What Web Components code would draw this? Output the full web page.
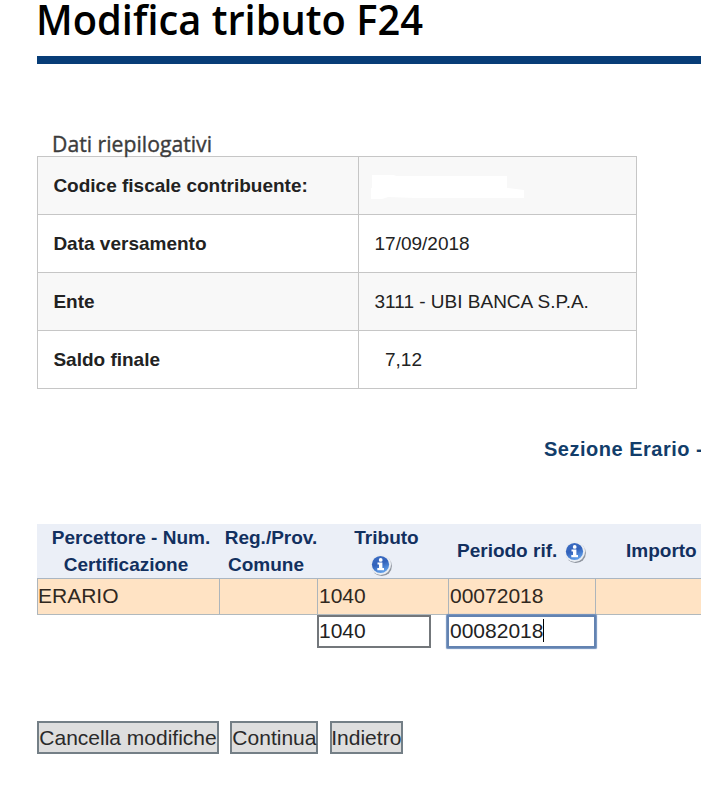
<!DOCTYPE html>
<html lang="it">
<head>
<meta charset="utf-8">
<title>Modifica tributo F24</title>
<style>
  body {
    margin: 0;
    width: 701px;
    height: 812px;
    overflow: hidden;
    background: #fff;
    color: #222;
    font-family: "Liberation Sans", Arial, sans-serif;
    font-size: 21px;
  }
</style>
</head>
<body>
<f24-page>
  <page-title slot="title" label="Modifica tributo F24"></page-title>
  <summary-table slot="summary" label="Dati riepilogativi">
    <summary-row shaded><span slot="name">Codice fiscale contribuente:</span><redacted-value></redacted-value></summary-row>
    <summary-row><span slot="name">Data versamento</span>17/09/2018</summary-row>
    <summary-row shaded><span slot="name">Ente</span>3111 - UBI BANCA S.P.A.</summary-row>
    <summary-row indent><span slot="name">Saldo finale</span>7,12</summary-row>
  </summary-table>
  <section-heading slot="section">Sezione Erario -</section-heading>
  <tax-table slot="taxes"></tax-table>
  <action-button slot="actions" style="--w: 182px">Cancella modifiche</action-button>
  <action-button slot="actions" style="--w: 88px">Continua</action-button>
  <action-button slot="actions" style="--w: 73px">Indietro</action-button>
</f24-page>

<script>
class F24Page extends HTMLElement {
  constructor() {
    super();
    this.attachShadow({ mode: "open" }).innerHTML = `
      <style>
        :host {
          display: flex;
          flex-direction: column;
          padding-left: 37px;
        }
        .summary { margin-top: 64px; }
        .section { margin-top: 47px; }
        .taxes { margin-top: 61px; }
        .actions {
          display: flex;
          margin-top: 72px;
        }
        ::slotted(action-button) { margin-right: 11.4px; }
      </style>
      <slot name="title"></slot>
      <div class="summary"><slot name="summary"></slot></div>
      <div class="section"><slot name="section"></slot></div>
      <div class="taxes"><slot name="taxes"></slot></div>
      <div class="actions"><slot name="actions"></slot></div>
    `;
  }
}

class PageTitle extends HTMLElement {
  connectedCallback() {
    this.attachShadow({ mode: "open" }).innerHTML = `
      <style>
        :host {
          display: block;
          height: 56px;
          border-bottom: 8px solid #073d77;
        }
        svg { display: block; overflow: visible; }
        text {
          font: 600 41px "Open Sans", "Noto Sans", sans-serif;
          fill: #000;
        }
      </style>
      <svg width="420" height="56">
        <text x="-1" y="35" textLength="387" lengthAdjust="spacingAndGlyphs">${this.getAttribute("label")}</text>
      </svg>
    `;
  }
}

class SummaryTable extends HTMLElement {
  connectedCallback() {
    this.attachShadow({ mode: "open" }).innerHTML = `
      <style>
        :host {
          display: block;
          width: 600px;
          font-size: 19px;
        }
        svg {
          display: block;
          position: relative;
          overflow: visible;
        }
        text {
          font: 400 22.5px "Open Sans", "Noto Sans", sans-serif;
          fill: #3c3c3c;
          stroke: #3c3c3c;
          stroke-width: 0.4px;
        }
        .rows { border-top: 1px solid #c6c6c6; }
      </style>
      <svg width="200" height="28">
        <text x="15" y="24" textLength="160" lengthAdjust="spacingAndGlyphs">${this.getAttribute("label")}</text>
      </svg>
      <div class="rows"><slot></slot></div>
    `;
  }
}

class SummaryRow extends HTMLElement {
  constructor() {
    super();
    this.attachShadow({ mode: "open" }).innerHTML = `
      <style>
        :host {
          display: grid;
          grid-template-columns: 322px 278px;
          box-sizing: border-box;
          height: 58px;
          border-bottom: 1px solid #c6c6c6;
          color: #222;
        }
        :host([shaded]) { background: #f8f8f8; }
        .name, .value {
          display: flex;
          align-items: center;
          box-sizing: border-box;
          padding-left: 15.5px;
          border-right: 1px solid #c6c6c6;
        }
        .name {
          padding-left: 15.4px;
          border-left: 1px solid #c6c6c6;
          font-weight: bold;
        }
        :host([indent]) .value { padding-left: 26px; }
      </style>
      <div class="name"><slot name="name"></slot></div>
      <div class="value"><slot></slot></div>
    `;
  }
}

class RedactedValue extends HTMLElement {
  constructor() {
    super();
    this.attachShadow({ mode: "open" }).innerHTML = `
      <style>
        :host { display: block; margin: 2px 0 0 -5px; }
        svg { display: block; }
      </style>
      <svg width="156" height="26" viewBox="0 0 156 26">
        <path fill="#fff" d="M2 1H24L26 2H137V14L154 16V24H45L18 23L12 25H1V14H2Z"/>
      </svg>
    `;
  }
}

class SectionHeading extends HTMLElement {
  constructor() {
    super();
    this.attachShadow({ mode: "open" }).innerHTML = `
      <style>
        :host {
          display: block;
          padding-left: 507px;
          font-size: 20px;
          font-weight: bold;
          line-height: 27px;
          letter-spacing: 0.5px;
          white-space: nowrap;
          color: #123d6a;
        }
      </style>
      <slot></slot>
    `;
  }
}

class InfoIcon extends HTMLElement {
  constructor() {
    super();
    this.attachShadow({ mode: "open" }).innerHTML = `
      <style>
        :host { display: block; width: 24px; height: 24px; }
        svg { display: block; }
      </style>
      <svg width="24" height="24" viewBox="0 0 24 24">
        <defs>
          <linearGradient id="ball" x1="0" y1="0" x2="0.4" y2="1">
            <stop offset="0" stop-color="#3f6fc4"/>
            <stop offset="0.55" stop-color="#3262bb"/>
            <stop offset="1" stop-color="#5d9be6"/>
          </linearGradient>
          <filter id="soft" x="-20%" y="-20%" width="140%" height="140%">
            <feGaussianBlur stdDeviation="0.7"/>
          </filter>
        </defs>
        <circle cx="12.8" cy="13" r="10.1" fill="#8f959f" filter="url(#soft)"/>
        <circle cx="11.7" cy="11.6" r="10.4" fill="#e9edf3"/>
        <circle cx="11.5" cy="11.5" r="8.6" fill="url(#ball)"/>
        <circle cx="11.7" cy="6.9" r="1.9" fill="#fff"/>
        <path fill="#fff" d="M8.5 9.6H13.4V15.1H15V17.2H8.3V15.1H10V11.5H8.5Z"/>
      </svg>
    `;
  }
}

class TextField extends HTMLElement {
  constructor() {
    super();
    this.attachShadow({ mode: "open" }).innerHTML = `
      <style>
        :host {
          display: flex;
          align-items: center;
          box-sizing: border-box;
          width: 114px;
          height: 33px;
          margin-left: -1px;
          padding-bottom: 2px;
          border: 2px solid #73777b;
          background: #fff;
          color: #222;
        }
        :host([focused]) {
          width: 149px;
          margin-left: -2px;
          padding-left: 1px;
          border-color: #6383b1;
          border-radius: 1px;
          box-shadow: 0 0 1px 0.5px #6f8fbd;
        }
        .caret { display: none; width: 1px; height: 23px; background: #000; }
        :host([focused]) .caret { display: block; }
      </style>
      <slot></slot><span class="caret"></span>
    `;
  }
}

class TaxTable extends HTMLElement {
  constructor() {
    super();
    this.attachShadow({ mode: "open" }).innerHTML = `
      <style>
        :host { display: block; width: 664px; }
        .line {
          display: grid;
          grid-template-columns: 183px 98px 131px 147px 105px;
        }
        .head {
          height: 54px;
          background: #ebeff7;
          color: #12305f;
          font-size: 19px;
          font-weight: bold;
          line-height: 27px;
          text-align: center;
          white-space: nowrap;
        }
        .first { padding-left: 5px; }
        .first span { margin-right: 10px; }
        .reg { padding-left: 4px; }
        .reg span { margin-right: 10px; }
        .tributo {
          display: flex;
          flex-direction: column;
          align-items: center;
          padding-left: 6px;
        }
        .tributo info-icon { margin: 2px 12px 0 0; }
        .periodo {
          display: flex;
          align-items: center;
          gap: 6px;
          padding: 0 0 1px 8px;
        }
        .periodo info-icon { margin-top: 3px; }
        .importo {
          display: flex;
          align-items: center;
          padding: 0 0 1px 30px;
        }
        .record {
          box-sizing: border-box;
          height: 37px;
          border-top: 1px solid #aab6c2;
          border-bottom: 1px solid #b1b9bd;
          background: #ffe3c4;
          color: #302820;
        }
        .record div {
          display: flex;
          align-items: center;
          box-sizing: border-box;
          padding: 0 0 2px 1px;
          border-right: 1px solid #adb5bb;
        }
        .record div:first-child {
          padding-left: 0;
          border-left: 1px solid #adb5bb;
        }
        .record div:last-child { border-right: 0; }
        .edit { height: 34px; }
      </style>
      <div class="line head">
        <div class="first">Percettore - Num.<br><span>Certificazione</span></div>
        <div class="reg">Reg./Prov.<br><span>Comune</span></div>
        <div class="tributo">Tributo<info-icon></info-icon></div>
        <div class="periodo">Periodo rif.<info-icon></info-icon></div>
        <div class="importo">Importo</div>
      </div>
      <div class="line record">
        <div>ERARIO</div>
        <div></div>
        <div>1040</div>
        <div>00072018</div>
        <div></div>
      </div>
      <div class="line edit">
        <div></div>
        <div></div>
        <text-field>1040</text-field>
        <text-field focused>00082018</text-field>
      </div>
    `;
  }
}

class ActionButton extends HTMLElement {
  constructor() {
    super();
    this.attachShadow({ mode: "open" }).innerHTML = `
      <style>
        :host {
          display: flex;
          align-items: center;
          justify-content: center;
          box-sizing: border-box;
          width: var(--w);
          height: 33px;
          border: 2px solid #747f86;
          background: #dedede;
          color: #2a2a2a;
          white-space: nowrap;
        }
      </style>
      <slot></slot>
    `;
  }
}

customElements.define("f24-page", F24Page);
customElements.define("page-title", PageTitle);
customElements.define("summary-table", SummaryTable);
customElements.define("summary-row", SummaryRow);
customElements.define("redacted-value", RedactedValue);
customElements.define("section-heading", SectionHeading);
customElements.define("info-icon", InfoIcon);
customElements.define("text-field", TextField);
customElements.define("tax-table", TaxTable);
customElements.define("action-button", ActionButton);
</script>
</body>
</html>
